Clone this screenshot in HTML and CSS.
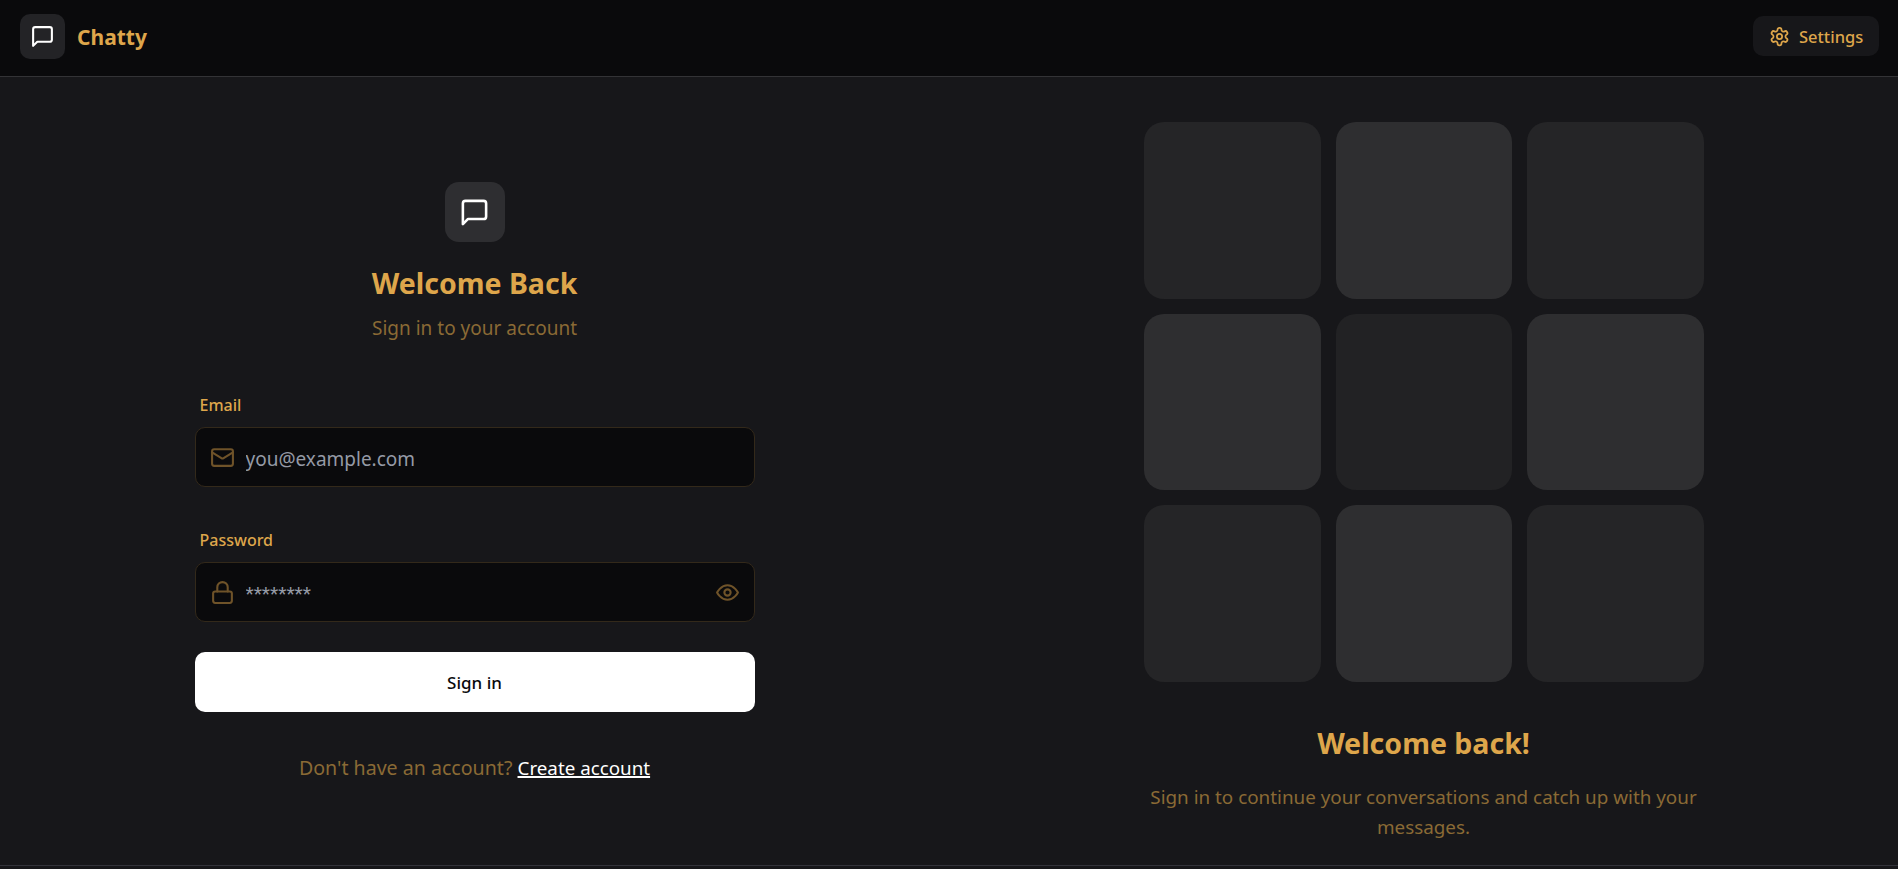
FILE: index.html
```html
<!DOCTYPE html>
<html lang="en">
<head>
    <meta charset="UTF-8">
    <meta name="viewport" content="width=device-width, initial-scale=1.0">
    <title>Chatty</title>
    <link rel="stylesheet" href="styles.css">
</head>
<body>
    <header class="navbar">
        <a class="brand" href="#">
            <span class="brand-icon">
                <svg class="icon-chat" viewBox="0 0 24 24"><path d="M21 15a2 2 0 0 1-2 2H7l-4 4V5a2 2 0 0 1 2-2h14a2 2 0 0 1 2 2z"/></svg>
            </span>
            <span class="brand-name">Chatty</span>
        </a>
        <a class="settings-btn" href="#">
            <svg class="icon-gear" viewBox="0 0 24 24"><path d="M12.22 2h-.44a2 2 0 0 0-2 2v.18a2 2 0 0 1-1 1.73l-.43.25a2 2 0 0 1-2 0l-.15-.08a2 2 0 0 0-2.73.73l-.22.38a2 2 0 0 0 .73 2.73l.15.1a2 2 0 0 1 1 1.72v.51a2 2 0 0 1-1 1.74l-.15.09a2 2 0 0 0-.73 2.73l.22.38a2 2 0 0 0 2.73.73l.15-.08a2 2 0 0 1 2 0l.43.25a2 2 0 0 1 1 1.73V20a2 2 0 0 0 2 2h.44a2 2 0 0 0 2-2v-.18a2 2 0 0 1 1-1.73l.43-.25a2 2 0 0 1 2 0l.15.08a2 2 0 0 0 2.73-.73l.22-.39a2 2 0 0 0-.73-2.73l-.15-.08a2 2 0 0 1-1-1.74v-.5a2 2 0 0 1 1-1.74l.15-.09a2 2 0 0 0 .73-2.73l-.22-.38a2 2 0 0 0-2.73-.73l-.15.08a2 2 0 0 1-2 0l-.43-.25a2 2 0 0 1-1-1.73V4a2 2 0 0 0-2-2z"/><circle cx="12" cy="12" r="3"/></svg>
            <span>Settings</span>
        </a>
    </header>

    <main class="page">
        <section class="login-side">
            <div class="login-box">
                <div class="login-head">
                    <span class="logo-tile">
                        <svg class="icon-chat-lg" viewBox="0 0 24 24"><path d="M21 15a2 2 0 0 1-2 2H7l-4 4V5a2 2 0 0 1 2-2h14a2 2 0 0 1 2 2z"/></svg>
                    </span>
                    <h1>Welcome Back</h1>
                    <p>Sign in to your account</p>
                </div>

                <form class="login-form">
                    <div class="field">
                        <label for="email">Email</label>
                        <div class="input-wrap">
                            <svg class="input-icon" viewBox="0 0 24 24"><rect x="2" y="4" width="20" height="16" rx="2"/><path d="m22 7-8.97 5.7a1.94 1.94 0 0 1-2.06 0L2 7"/></svg>
                            <input id="email" type="email" placeholder="you@example.com">
                        </div>
                    </div>
                    <div class="field">
                        <label for="password">Password</label>
                        <div class="input-wrap">
                            <svg class="input-icon" viewBox="0 0 24 24"><rect x="3" y="11" width="18" height="11" rx="2"/><path d="M7 11V7a5 5 0 0 1 10 0v4"/></svg>
                            <input class="input-stars" id="password" type="text" placeholder="********">
                            <svg class="input-eye" viewBox="0 0 24 24"><path d="M2 12s3.5-7 10-7 10 7 10 7-3.5 7-10 7-10-7-10-7z"/><circle cx="12" cy="12" r="3"/></svg>
                        </div>
                    </div>
                    <button class="submit-btn" type="button">Sign in</button>
                </form>

                <p class="switch-text">Don't have an account? <a href="#">Create account</a></p>
            </div>
        </section>

        <section class="pattern-side">
            <div class="tile-grid">
                <div class="tile"></div>
                <div class="tile tile-light"></div>
                <div class="tile"></div>
                <div class="tile tile-light"></div>
                <div class="tile tile-dark"></div>
                <div class="tile tile-light"></div>
                <div class="tile"></div>
                <div class="tile tile-light"></div>
                <div class="tile"></div>
            </div>
            <h2>Welcome back!</h2>
            <p>Sign in to continue your conversations and catch up with your messages.</p>
        </section>
    </main>
</body>
</html>
```

FILE: styles.css
```css
* {
    box-sizing: border-box;
}
html, body {
    margin: 0;
    height: 100%;
}
body {
    font-family: "Noto Sans", "Open Sans", sans-serif;
    background: #17171a;
    color: #dea64b;
    overflow: hidden;
}
a {
    text-decoration: none;
    color: inherit;
}
svg {
    fill: none;
    stroke: currentColor;
    stroke-width: 2;
    stroke-linecap: round;
    stroke-linejoin: round;
    flex-shrink: 0;
}

.navbar {
    height: 77px;
    padding: 14px 19px 0 20px;
    display: flex;
    align-items: flex-start;
    justify-content: space-between;
    background: #0a0a0c;
    border-bottom: 1px solid #333336;
}
.brand {
    display: flex;
    align-items: center;
    gap: 12px;
}
.brand-icon {
    width: 45px;
    height: 45px;
    border-radius: 10px;
    background: #232326;
    color: #fff;
    display: flex;
    align-items: center;
    justify-content: center;
}
.icon-chat {
    width: 25px;
    height: 25px;
}
.brand-name {
    font-size: 21px;
    font-weight: 700;
}
.settings-btn {
    height: 40px;
    width: 126px;
    margin-top: 2px;
    padding: 0 16px;
    border-radius: 10px;
    background: #17171a;
    display: flex;
    align-items: center;
    gap: 9px;
    font-size: 16.5px;
    font-weight: 500;
}
.icon-gear {
    width: 21px;
    height: 21px;
}

.page {
    height: 789px;
    display: grid;
    grid-template-columns: 1fr 1fr;
    border-bottom: 1px solid #33333a;
}

.login-side {
    display: flex;
    justify-content: center;
    padding-top: 105px;
}
.login-box {
    width: 560px;
}
.login-head {
    display: flex;
    flex-direction: column;
    align-items: center;
}
.logo-tile {
    width: 60px;
    height: 60px;
    border-radius: 14px;
    background: #2e2e31;
    color: #fff;
    display: flex;
    align-items: center;
    justify-content: center;
}
.icon-chat-lg {
    width: 31px;
    height: 31px;
}
.login-head h1 {
    margin: 21px 0 0;
    font-size: 28.5px;
    line-height: 40px;
    font-weight: 700;
}
.login-head p {
    margin: 11px 0 0;
    font-size: 19px;
    line-height: 28px;
    color: #8a6a35;
}

.login-form {
    margin-top: 51px;
    display: flex;
    flex-direction: column;
}
.field + .field {
    margin-top: 41px;
}
.field label {
    display: block;
    padding-left: 5px;
    margin-bottom: 10px;
    font-size: 16px;
    line-height: 24px;
    font-weight: 500;
}
.input-wrap {
    height: 60px;
    padding: 0 14px;
    display: flex;
    align-items: center;
    gap: 11px;
    background: #0a0a0c;
    border: 1px solid #33291a;
    border-radius: 10px;
}
.input-wrap input {
    flex: 1;
    min-width: 0;
    height: 100%;
    padding: 4px 0 0;
    background: transparent;
    border: none;
    outline: none;
    font-family: inherit;
    font-size: 19px;
    color: #fff;
}
.input-wrap input::placeholder {
    color: #959aa6;
    opacity: 1;
}
.input-wrap .input-stars {
    padding-top: 2px;
    font-family: Roboto, sans-serif;
}
.input-icon, .input-eye {
    width: 25px;
    height: 25px;
    color: #6f5329;
}
.submit-btn {
    width: 100%;
    height: 60px;
    margin-top: 30px;
    background: #fff;
    color: #0a0a0c;
    border: none;
    border-radius: 10px;
    font-family: inherit;
    font-size: 17px;
    font-weight: 500;
    cursor: pointer;
}
.switch-text {
    margin: 42px 0 0;
    text-align: center;
    font-size: 19.6px;
    line-height: 28px;
    color: #8a6a35;
}
.switch-text a {
    font-size: 18.8px;
    color: #fff;
    text-decoration: underline;
    text-decoration-thickness: 2px;
}

.pattern-side {
    display: flex;
    flex-direction: column;
    align-items: center;
    padding-top: 45px;
    text-align: center;
}
.tile-grid {
    width: 560px;
    margin-left: 1px;
    display: grid;
    grid-template-columns: repeat(3, 1fr);
    gap: 15px;
}
.tile {
    aspect-ratio: 1;
    border-radius: 20px;
    background: #252527;
}
.tile-light {
    background: #2e2e30;
}
.tile-dark {
    background: #222224;
}
.pattern-side h2 {
    margin: 41px 0 0;
    font-size: 28.5px;
    line-height: 40px;
    font-weight: 700;
}
.pattern-side p {
    width: 560px;
    margin: 19px 0 0;
    font-size: 18.85px;
    line-height: 30px;
    color: #8a6a35;
}
```
